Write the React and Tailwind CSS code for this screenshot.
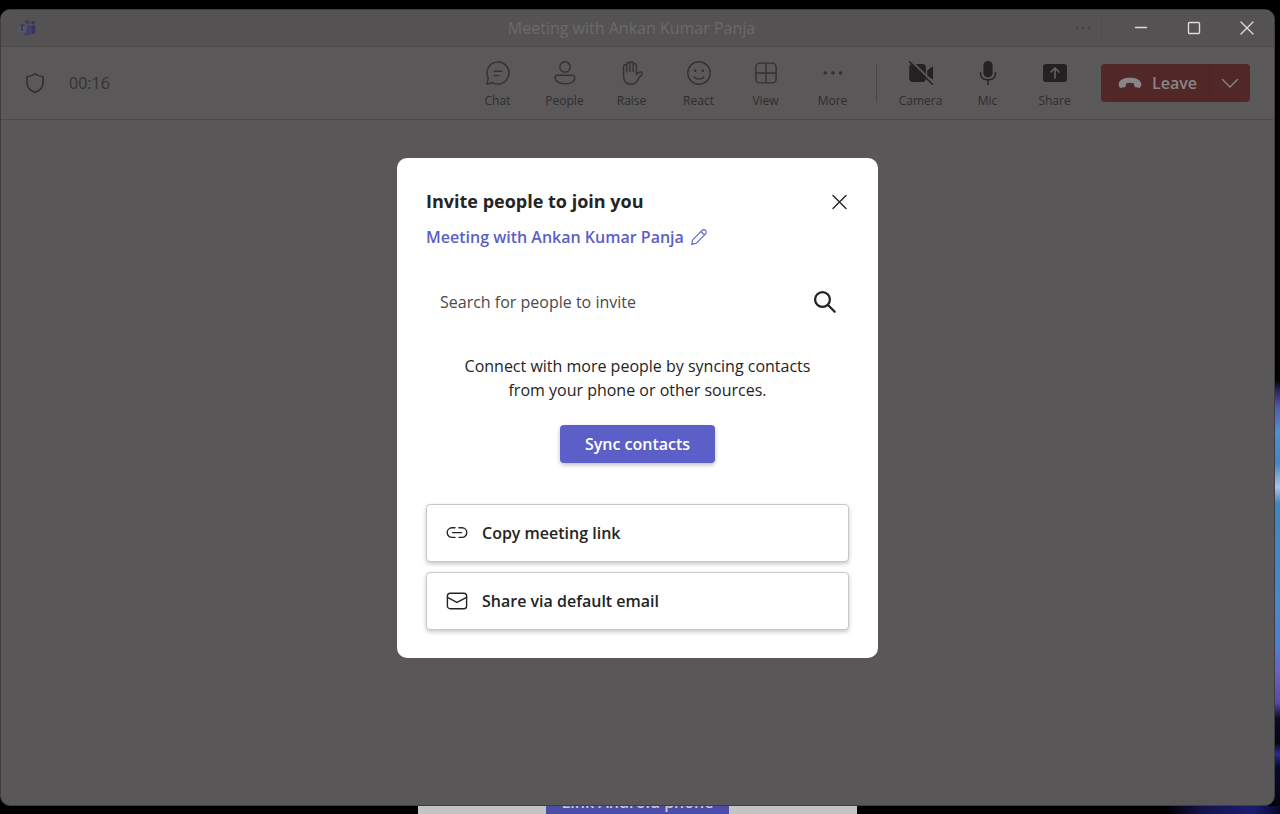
import React from "react";

const line = {
  fill: "none",
  stroke: "currentColor",
  strokeWidth: 1.4,
  strokeLinecap: "round",
  strokeLinejoin: "round",
};

function Icon({ children, className = "size-6", box = "0 0 24 24", ...rest }) {
  return (
    <svg viewBox={box} className={className} aria-hidden="true" {...rest}>
      {children}
    </svg>
  );
}

const ChatIcon = () => (
  <Icon {...line}>
    <path d="M2.2 17A11 11 0 1 1 7 21.8L.9 23.1Z" />
    <path d="M8.2 10.3h7.6M8.2 14.6h4.8" />
  </Icon>
);

const PeopleIcon = () => (
  <Icon {...line}>
    <circle cx="12" cy="6" r="5.2" />
    <path d="M4.4 14.3h15.2a2.3 2.3 0 0 1 2.3 2.3c0 3.9-4.1 6.2-9.9 6.2s-9.9-2.3-9.9-6.2a2.3 2.3 0 0 1 2.3-2.3z" />
  </Icon>
);

const HandIcon = () => (
  <Icon {...line}>
    <path d="M6.8 11V2.9a1.6 1.6 0 0 1 3.2 0v7.6M10 2.9v-.6a1.6 1.6 0 0 1 3.2 0v8.2M13.2 4.2a1.6 1.6 0 0 1 3.2 0v9.3c1.2-1.4 2.6-2.9 4.3-2.5 1.6.4 1.8 1.8.9 2.8-1.6 1.6-2.8 3.4-4.1 5.5-1.6 2.5-3.3 3.9-6.4 3.9-4.7 0-7.5-2.4-7.5-8V5.3a1.6 1.6 0 0 1 3.2 0" />
  </Icon>
);

const SmileIcon = () => (
  <Icon {...line}>
    <circle cx="12" cy="12" r="11.2" />
    <path d="M7.2 16c2.4 2.8 7.2 2.8 9.6 0" />
    <circle cx="8.2" cy="9.8" r="1.3" fill="currentColor" stroke="none" />
    <circle cx="15.8" cy="9.8" r="1.3" fill="currentColor" stroke="none" />
  </Icon>
);

const ViewIcon = () => (
  <Icon {...line}>
    <rect x="1.9" y="2.1" width="20.2" height="19.8" rx="3.6" />
    <path d="M12 2.1v19.8M1.9 12h20.2" />
  </Icon>
);

const MoreIcon = () => (
  <Icon fill="currentColor">
    <circle cx="4.3" cy="12" r="1.8" />
    <circle cx="12" cy="12" r="1.8" />
    <circle cx="19.7" cy="12" r="1.8" />
  </Icon>
);

const CameraOffIcon = () => (
  <Icon fill="currentColor">
    <rect x=".2" y="3" width="16.6" height="18" rx="3.4" />
    <path d="M18.2 9.6l4.6-3.7a.9.9 0 0 1 1.4.7v10.8a.9.9 0 0 1-1.4.7l-4.6-3.7z" />
    <path d="M1.8-.4L25.5 23" stroke="#5b5859" strokeWidth="2" />
    <path d="M.6.8l22.8 22.4" stroke="currentColor" strokeWidth="1.5" strokeLinecap="round" />
  </Icon>
);

const MicIcon = () => (
  <Icon fill="currentColor">
    <rect x="7.4" y="0" width="9.2" height="16.4" rx="4.6" />
    <path d="M4.4 11.6c0 5 3 7.4 7.6 7.4s7.6-2.4 7.6-7.4M12 19v4.4" {...line} />
  </Icon>
);

const ShareIcon = () => (
  <Icon fill="currentColor">
    <rect x="0" y="3" width="24" height="18" rx="3" />
    <path d="M12 17V7.2M8 11l4-4 4 4" fill="none" stroke="#656263" strokeWidth="1.6" strokeLinecap="round" strokeLinejoin="round" />
  </Icon>
);

const HangUpIcon = () => (
  <Icon fill="currentColor">
    <path d="M12 6.8c6.2 0 10.4 2 11.2 5.6.3 1.5-.1 3-.8 3.8-.4.5-1 .6-1.7.5l-3-.5c-.9-.2-1.4-.7-1.5-1.5l-.4-2.4c-2.4-.8-5.2-.8-7.6 0l-.4 2.4c-.1.8-.6 1.3-1.5 1.5l-3 .5c-.7.1-1.3 0-1.7-.5-.7-.8-1.1-2.3-.8-3.8C1.6 8.8 5.800 6.8 12 6.8z" />
  </Icon>
);

function TeamsLogo() {
  return (
    <Icon className="size-[18px]" box="0 0 20 20">
      <circle cx="10.3" cy="3.4" r="2.6" fill="#3f3f6b" />
      <circle cx="16.8" cy="4.3" r="2" fill="#36365f" />
      <path d="M14.8 7.400h4.400v6.200c0 2-1.200 3.300-3.200 3.300h-1.200z" fill="#34345f" />
      <path d="M6 7h8.200v6.500c0 3-1.700 4.700-4.200 4.700S5.800 16.500 5.800 13.500z" fill="#3e3e70" />
      <rect x="0" y="4.500" width="9.500" height="10.500" rx="1" fill="#585562" />
      <path d="M1.600 6.800h5.800M4.500 6.800V13" stroke="#33335c" strokeWidth="1.600" fill="none" />
    </Icon>
  );
}

function Tool({ label, icon: Glyph, solid }) {
  return (
    <button type="button" className="flex w-[67px] flex-col items-center gap-2 pt-1 text-[#2f2d2e]">
      <span className={solid ? "text-[#232122]" : "text-[#333132]"}>
        <Glyph />
      </span>
      <span className="text-xs">{label}</span>
    </button>
  );
}

function TitleBar() {
  return (
    <header className="grid h-[37px] grid-cols-[1fr_auto_1fr] items-center border-b border-[#4b494a] bg-[#555253]">
      <div className="pl-[17px]">
        <TeamsLogo />
      </div>
      <h1 className="pr-3 text-base text-[#6b696a]">Meeting with Ankan Kumar Panja</h1>
      <div className="flex items-center justify-end pr-px">
        <button type="button" aria-label="More options" className="mr-2.5 text-[#474546]">
          <Icon className="h-4 w-4" box="0 0 16 16" fill="currentColor">
            <circle cx="2" cy="8" r="1.4" />
            <circle cx="8" cy="8" r="1.4" />
            <circle cx="14" cy="8" r="1.4" />
          </Icon>
        </button>
        <span className="h-6 w-px bg-[#4f4d4e]" />
        <div className="ml-3 flex text-[#dcdbdb]">
          <button type="button" aria-label="Minimize" className="flex h-9 w-[53px] items-center justify-center">
            <Icon className="h-4 w-4" box="0 0 16 16" {...line}>
              <path d="M2.5 7.5h11" />
            </Icon>
          </button>
          <button type="button" aria-label="Maximize" className="flex h-9 w-[53px] items-center justify-center">
            <Icon className="h-4 w-4" box="0 0 16 16" {...line}>
              <rect x="2.5" y="2.5" width="11" height="11" rx="1" />
            </Icon>
          </button>
          <button type="button" aria-label="Close window" className="flex h-9 w-[53px] items-center justify-center">
            <Icon className="h-4 w-4" box="0 0 16 16" {...line}>
              <path d="M2 2l12 12M14 2L2 14" />
            </Icon>
          </button>
        </div>
      </div>
    </header>
  );
}

function Toolbar() {
  return (
    <div className="flex h-[73px] items-center border-b border-[#4b494a] bg-[#5b5859] pr-6 pl-[22px]">
      <Icon className="size-6 text-[#2b292a]" {...line}>
        <path d="M12 2.8c2.4 1.8 5 2.7 8 2.8v6.2c0 4.6-2.8 7.7-8 9.7-5.2-2-8-5.1-8-9.7V5.600c3-.1 5.600-1 8-2.800z" />
      </Icon>
      <span className="ml-[22px] flex-1 text-base text-[#343233]">00:16</span>
      <div className="flex">
        <Tool label="Chat" icon={ChatIcon} />
        <Tool label="People" icon={PeopleIcon} />
        <Tool label="Raise" icon={HandIcon} />
        <Tool label="React" icon={SmileIcon} />
        <Tool label="View" icon={ViewIcon} />
        <Tool label="More" icon={MoreIcon} />
      </div>
      <span className="mx-2.5 h-[38px] w-px bg-[#484647]" />
      <div className="flex">
        <Tool label="Camera" icon={CameraOffIcon} solid />
        <Tool label="Mic" icon={MicIcon} solid />
        <Tool label="Share" icon={ShareIcon} solid />
      </div>
      <div className="ml-[13px] flex h-[38px] w-[149px] rounded bg-[#512728] text-[#8a8687]">
        <button type="button" className="flex flex-1 items-center gap-2.5 border-r border-[#4c2526] pl-[17px] font-semibold">
          <HangUpIcon />
          Leave
        </button>
        <button type="button" aria-label="Leave options" className="flex w-10 items-center justify-center">
          <Icon className="size-5" box="0 0 20 20" {...line}>
            <path d="M2.5 6.5l7.5 7.5 7.5-7.5" />
          </Icon>
        </button>
      </div>
    </div>
  );
}

function ActionCard({ label, children }) {
  return (
    <button
      type="button"
      className="flex h-[58px] w-full items-center gap-3.5 rounded border border-[#c8c8c8] bg-white px-[19px] font-semibold text-[#242424] shadow-[0_2px_4px_rgba(0,0,0,0.22)]"
    >
      <Icon className="size-[22px]" box="0 0 22 22" {...line}>
        {children}
      </Icon>
      {label}
    </button>
  );
}

function InviteDialog() {
  return (
    <section
      role="dialog"
      aria-modal="true"
      aria-labelledby="invite-title"
      className="w-[481px] rounded-[10px] bg-white px-[29px] py-7 text-base text-[#242424]"
    >
      <div className="flex h-[30px] items-center justify-between">
        <h2 id="invite-title" className="text-lg font-bold">
          Invite people to join you
        </h2>
        <button type="button" aria-label="Close">
          <Icon className="size-5" box="0 0 20 20" {...line}>
            <path d="M4 4.5l13 13M17 4.5l-13 13" />
          </Icon>
        </button>
      </div>
      <div className="mt-px flex h-10 items-center gap-1.5 font-semibold text-[#5b5fc7]">
        Meeting with Ankan Kumar Panja
        <button type="button" aria-label="Edit meeting name">
          <Icon className="size-[18px]" box="0 0 18 18" {...line} strokeWidth="1.1">
            <path d="M12.3 2.2a2.5 2.5 0 0 1 3.5 3.5L6.2 15.3l-4.6 1.1 1.1-4.6zM11 3.5L14.5 7" />
          </Icon>
        </button>
      </div>
      <div className="mt-[25px] flex h-10 items-center justify-between pr-3 pl-3.5">
        <input
          type="text"
          aria-label="Search for people to invite"
          placeholder="Search for people to invite"
          className="min-w-0 flex-1 outline-none placeholder:text-[#4a4a4a]"
        />
        <button type="button" aria-label="Search">
          <Icon className="size-6" {...line} strokeWidth="2.3">
            <circle cx="9.5" cy="9.5" r="7.4" />
            <path d="M15 15l6.7 6.7" />
          </Icon>
        </button>
      </div>
      <p className="mt-8 text-center leading-6">
        Connect with more people by syncing contacts
        <br />
        from your phone or other sources.
      </p>
      <div className="mt-[23px] flex justify-center">
        <button
          type="button"
          className="h-[38px] w-[155px] rounded bg-[#5b5fc7] font-semibold text-white shadow-[0_2px_4px_rgba(0,0,0,0.25)]"
        >
          Sync contacts
        </button>
      </div>
      <div className="mt-[41px] flex flex-col gap-2.5">
        <ActionCard label="Copy meeting link">
          <path d="M9 5.8H6a4.8 4.8 0 0 0 0 9.6h3M13 5.8h3a4.8 4.8 0 0 1 0 9.6h-3M6.5 10.6h9" />
        </ActionCard>
        <ActionCard label="Share via default email">
          <rect x="1.4" y="3.3" width="19.2" height="15.4" rx="2.8" />
          <path d="M1.4 7.3l9.6 5 9.6-5" />
        </ActionCard>
      </div>
    </section>
  );
}

export default function App() {
  return (
    <div className="flex min-h-screen flex-col bg-black pt-[9px] font-['Open_Sans','Noto_Sans',sans-serif]">
      <div className="flex flex-1">
        <main className="relative flex flex-1 flex-col overflow-hidden rounded-[10px] border border-[#3f3d3e] bg-[#595757]">
          <TitleBar />
          <Toolbar />
          <div className="absolute inset-0 flex items-center justify-center">
            <InviteDialog />
          </div>
        </main>
        <div className="w-[5px] bg-[linear-gradient(180deg,#000_46.5%,#2b2868_48%,#4f5cb0_50%,#4f8fd6_53%,#3d86cc_57%,#a9c6e8_60%,#3c87c6_62%,#4588cc_75%,#4a7fd6_80%,#6a62c4_83%,#5a48b0_87%,#0c0a2a_89%,#060512_92%,#2b2aa0_93.5%,#0a0930_95%,#05040f_100%)]" />
      </div>
      <div className="flex h-2 justify-center overflow-hidden bg-[linear-gradient(90deg,#000_91%,#14144c_94%,#1c1c70_98%,#08082a_100%)] pr-[5px]">
        <div className="flex w-[439px] items-end justify-center bg-[#c4c4c4]">
          <button type="button" className="w-[183px] bg-[#4b4da6] text-center text-base font-semibold text-[#c9c9d6]">
            Link Android phone
          </button>
        </div>
      </div>
    </div>
  );
}
